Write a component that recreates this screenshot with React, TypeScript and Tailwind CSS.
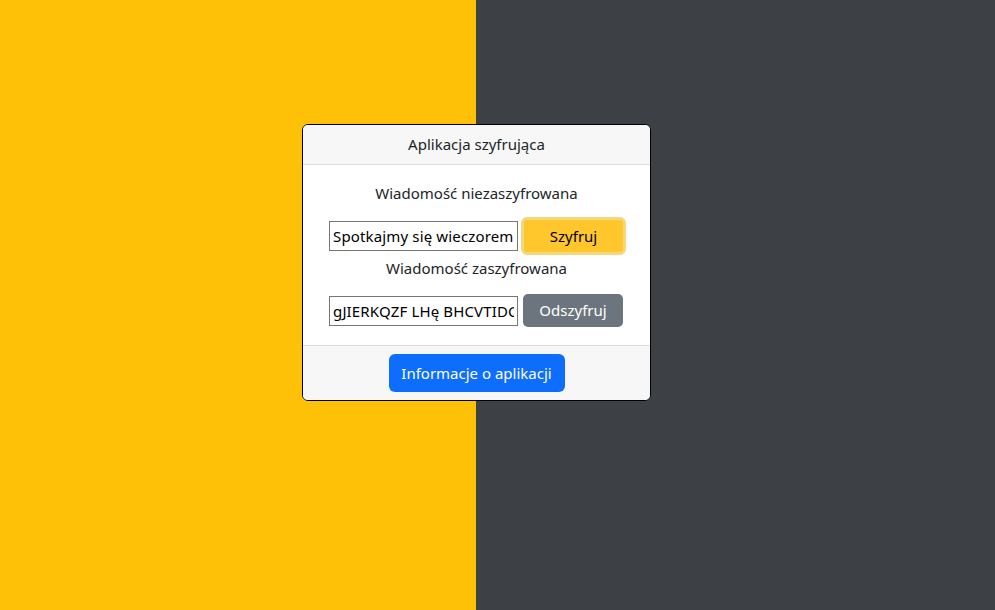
import { useState } from 'react'

const font = { fontFamily: '"Noto Sans", "Open Sans", sans-serif' }

export default function App() {
  const [plain, setPlain] = useState('Spotkajmy się wieczorem')
  const [cipher, setCipher] = useState('gJIERKQZF LHę BHCVTIDCQ')

  return (
    <div className="relative flex h-[610px] w-[995px] overflow-hidden" style={font}>
      <div className="h-full w-[476px] bg-[#ffc107]" />
      <div className="h-full flex-1 bg-[#3d4145]" />

      <div className="absolute left-[302px] top-[124px] w-[349px] overflow-hidden rounded-[6px] border border-black bg-white text-[#212529]">
        <div className="flex h-[40px] items-center justify-center border-b border-[#dcdcdc] bg-[#f7f7f7] text-[15px]">
          Aplikacja szyfrująca
        </div>

        <div className="flex flex-col items-center pb-[18px] pt-[18px]">
          <p className="text-[15px] leading-5">Wiadomość niezaszyfrowana</p>
          <div className="ml-[26px] mt-[14px] flex items-center gap-[3px] self-start">
            <input
              value={plain}
              onChange={(e) => setPlain(e.target.value)}
              className="h-[30px] w-[189px] border border-[#767676] px-[3px] text-[15px] tracking-[0.15px] text-black outline-none"
            />
            <button className="h-[38px] w-[105px] rounded-[6px] border-[3px] border-[#f5d77c] bg-[#ffc72c] text-[15px] text-black">
              Szyfruj
            </button>
          </div>
          <p className="mt-[3px] text-[15px] leading-5">Wiadomość zaszyfrowana</p>
          <div className="ml-[26px] mt-[16px] flex items-center gap-[5px] self-start">
            <input
              value={cipher}
              onChange={(e) => setCipher(e.target.value)}
              className="h-[30px] w-[189px] border border-[#767676] px-[3px] text-[15px] tracking-[0.15px] text-black outline-none"
            />
            <button className="h-[33px] w-[100px] rounded-[5px] bg-[#6c757d] text-[15px] text-white">
              Odszyfruj
            </button>
          </div>
        </div>

        <div className="flex justify-center border-t border-[#dcdcdc] bg-[#f7f7f7] pb-2 pt-2">
          <button className="h-[38px] w-[176px] rounded-[6px] bg-[#0d6efd] text-[15px] text-white">
            Informacje o aplikacji
          </button>
        </div>
      </div>
    </div>
  )
}
